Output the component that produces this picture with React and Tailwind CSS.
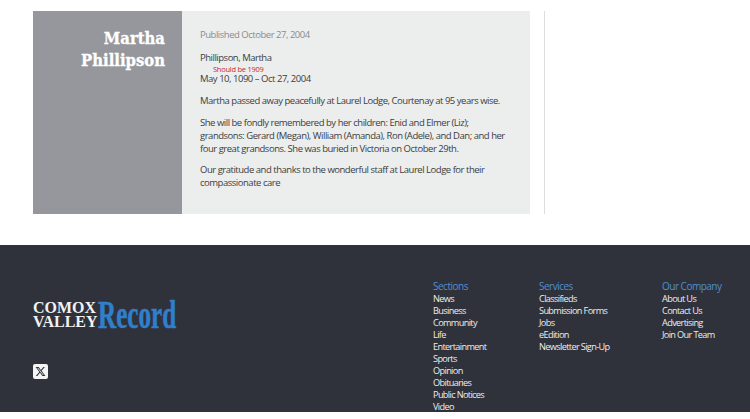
const sections = ["News", "Business", "Community", "Life", "Entertainment", "Sports", "Opinion", "Obituaries", "Public Notices", "Video"]
const services = ["Classifieds", "Submission Forms", "Jobs", "eEdition", "Newsletter Sign-Up"]
const company = ["About Us", "Contact Us", "Advertising", "Join Our Team"]

function FooterColumn({ title, items, className }) {
  return (
    <div className={className}>
      <h3 className="text-[10px] leading-[13px] tracking-[-0.5px] text-[#4f8fd0]">{title}</h3>
      <ul className="text-[9.2px] leading-[12px] tracking-[-0.65px] text-[#eceded]">
        {items.map((item) => (
          <li key={item}>{item}</li>
        ))}
      </ul>
    </div>
  )
}

export default function App() {
  return (
    <div className="h-[419px] overflow-hidden bg-white font-['Open_Sans',sans-serif]">
      <main className="flex items-stretch pt-[11px] pl-[33px]">
        <div className="flex h-[203px] w-[497px]">
          <div className="w-[149px] bg-[#96979c] pt-[17px] pr-[17px] text-right">
            <h1 className="font-['DejaVu_Serif_Condensed','DejaVu_Serif',serif] text-[16.5px] font-bold leading-[21.5px] text-white [-webkit-text-stroke:0.3px_white]">
              Martha
              <br />
              Phillipson
            </h1>
          </div>
          <article className="flex-1 bg-[#eceded] pt-[17px] pl-[18px] pr-[17px] text-[9.5px] leading-[13px] tracking-[-0.48px] text-[#3c3d40]">
            <p className="text-[#8b8c90]">Published October 27, 2004</p>
            <p className="mt-[10px]">Phillipson, Martha</p>
            <p className="relative mt-[8px]">
              <span className="absolute -top-[8px] left-[13px] text-[7.5px] leading-[10px] tracking-[-0.25px] text-[#c8282d]">Should be 1909</span>
              May 10, 1090 – Oct 27, 2004
            </p>
            <p className="mt-[9px]">Martha passed away peacefully at Laurel Lodge, Courtenay at 95 years wise.</p>
            <p className="mt-[8.5px]">
              She will be fondly remembered by her children: Enid and Elmer (Liz); grandsons: Gerard (Megan), William (Amanda), Ron (Adele), and Dan; and her four great grandsons. She was buried in Victoria on October 29th.
            </p>
            <p className="mt-[8.5px]">Our gratitude and thanks to the wonderful staff at Laurel Lodge for their compassionate care</p>
          </article>
        </div>
        <div className="ml-[14px] h-[203px] w-px bg-[#dddddd]"></div>
      </main>

      <footer className="mt-[31px] flex h-[167px] overflow-hidden bg-[#30323b]">
        <div className="w-[433px] pl-[33px] pt-[54px]">
          <svg width="145" height="32" viewBox="0 0 145 32" className="block overflow-visible">
            <g transform="scale(0.94 1)" fontFamily="Liberation Serif" fontWeight="700" fontSize="17" fill="#f2f2f2">
              <text x="0" y="14">COMOX</text>
              <text x="0" y="28">VALLEY</text>
            </g>
            <g transform="translate(65 0) scale(0.645 1)">
              <text x="0" y="29" fontFamily="Liberation Serif" fontWeight="700" fontSize="39" fill="#2f7fcb" stroke="#2f7fcb" strokeWidth="0.6">Record</text>
            </g>
          </svg>
          <div className="mt-[33px] flex h-[15px] w-[15px] items-center justify-center rounded-[2px] bg-[#f4f4f4]">
            <svg width="11" height="11" viewBox="0 0 24 24" fill="#30323b">
              <path d="M18.244 2.25h3.308l-7.227 8.26 8.502 11.24H16.17l-5.214-6.817L4.99 21.75H1.68l7.73-8.835L1.254 2.25H8.08l4.713 6.231zm-1.161 17.52h1.833L7.084 4.126H5.117z" />
            </svg>
          </div>
        </div>
        <FooterColumn title="Sections" items={sections} className="w-[106px] pt-[35px]" />
        <FooterColumn title="Services" items={services} className="w-[123px] pt-[35px]" />
        <FooterColumn title="Our Company" items={company} className="pt-[35px]" />
      </footer>
    </div>
  )
}
